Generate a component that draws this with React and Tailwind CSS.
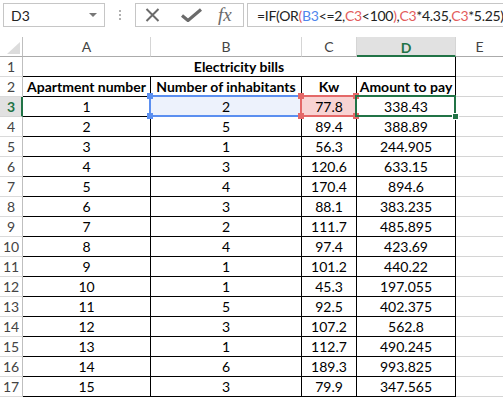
import React from "react";

const data = [
  [1, 2, "77.8", "338.43"],
  [2, 5, "89.4", "388.89"],
  [3, 1, "56.3", "244.905"],
  [4, 3, "120.6", "633.15"],
  [5, 4, "170.4", "894.6"],
  [6, 3, "88.1", "383.235"],
  [7, 2, "111.7", "485.895"],
  [8, 4, "97.4", "423.69"],
  [9, 1, "101.2", "440.22"],
  [10, 1, "45.3", "197.055"],
  [11, 5, "92.5", "402.375"],
  [12, 3, "107.2", "562.8"],
  [13, 1, "112.7", "490.245"],
  [14, 6, "189.3", "993.825"],
  [15, 3, "79.9", "347.565"],
];

function RefBox({ color, fill }) {
  const sq = "absolute w-[6px] h-[6px]";
  return (
    <div className={"absolute -left-[2px] -top-[2px] -right-[1px] -bottom-[1px] border-2 pointer-events-none " + color}>
      <div className={sq + " -left-[4px] -top-[4px] " + fill}></div>
      <div className={sq + " -right-[4px] -top-[4px] " + fill}></div>
      <div className={sq + " -left-[4px] -bottom-[4px] " + fill}></div>
      <div className={sq + " -right-[4px] -bottom-[4px] " + fill}></div>
    </div>
  );
}

function RowHead({ n, sel }) {
  if (sel) {
    return (
      <div className="h-[20px] bg-[#e1e1e1] border-r-2 border-r-[#217346] border-b border-b-[#d4d4d4] flex items-center justify-center text-[14px] font-bold text-[#217346] pl-[1px]">
        {n}
      </div>
    );
  }
  return (
    <div className="h-[20px] border-r border-r-[#bfbfbf] border-b border-b-[#dadada] flex items-center justify-center text-[14px] text-[#444]">
      {n}
    </div>
  );
}

function C({ children, className = "" }) {
  return (
    <div className={"relative h-[20px] border-r border-b border-black flex items-center justify-center text-[14px] text-black " + className}>
      {children}
    </div>
  );
}

function E() {
  return <div className="h-[20px] border-b border-b-[#d4d4d4]"></div>;
}

export default function App() {
  return (
    <div className="w-[503px] h-[399px] bg-white overflow-hidden font-[Lato,sans-serif] select-none">
      {/* formula bar */}
      <div className="h-[37px] flex items-start pt-[3px]">
        <div className="shrink-0 ml-[3px] w-[102px] h-[24px] border border-[#c6c6c6] flex items-center justify-between pl-[7px] pr-[7px]">
          <span className="text-[14px] text-[#222]">D3</span>
          <svg width="8" height="4" viewBox="0 0 8 4"><path d="M0 0H8L4 4Z" fill="#777" /></svg>
        </div>
        <div className="shrink-0 w-[30px] h-[24px] flex flex-col items-center justify-center gap-[2px]">
          <div className="w-[2px] h-[2px] bg-[#b0b0b0]"></div>
          <div className="w-[2px] h-[2px] bg-[#b0b0b0]"></div>
          <div className="w-[2px] h-[2px] bg-[#b0b0b0]"></div>
        </div>
        <div className="shrink-0 w-[109px] h-[24px] border border-[#c6c6c6] flex items-center">
          <svg className="ml-[9px] shrink-0" width="15" height="14" viewBox="0 0 15 14">
            <path d="M1.5 1L13.5 13M13.5 1L1.5 13" stroke="#6b6b6b" strokeWidth="2" />
          </svg>
          <svg className="ml-[21px] shrink-0" width="21" height="14" viewBox="0 0 21 14">
            <path d="M1 7.5L7 12.5L20 1.5" stroke="#6b6b6b" strokeWidth="3.2" fill="none" />
          </svg>
          <span className="ml-[16px] font-['Liberation_Serif',serif] italic text-[19px] leading-none text-[#6b6b6b] -mt-[2px]">fx</span>
        </div>
        <div className="ml-[3px] flex-1 min-w-0 overflow-hidden h-[24px] border-t border-b border-l border-[#c6c6c6] flex items-center pl-[9px] text-[14px] text-[#222] whitespace-nowrap tracking-[-0.3px]">
          <span>=IF(OR</span>
          <span className="text-[#e35c5c]">(</span>
          <span className="text-[#4f86ec]">B3</span>
          <span>&lt;=2,</span>
          <span className="text-[#e35c5c]">C3</span>
          <span>&lt;100</span>
          <span className="text-[#e35c5c]">)</span>
          <span>,</span>
          <span className="text-[#e35c5c]">C3</span>
          <span>*4.35,</span>
          <span className="text-[#e35c5c]">C3</span>
          <span>*5.25)</span>
        </div>
      </div>

      {/* grid */}
      <div className="grid grid-cols-[23px_128px_151px_55px_99px_47px] auto-rows-[20px]">
        {/* column headers */}
        <div className="h-[20px] border-r border-r-[#bfbfbf] border-b border-b-[#ababab] relative">
          <svg className="absolute right-[2px] bottom-[2px]" width="13" height="12" viewBox="0 0 13 12">
            <path d="M13 0V12H0Z" fill="#dcdcdc" />
          </svg>
        </div>
        {["A", "B", "C"].map((l) => (
          <div key={l} className="h-[20px] border-r border-r-[#d5d5d5] border-b border-b-[#ababab] flex items-center justify-center text-[14px] text-[#444]">
            {l}
          </div>
        ))}
        <div className="h-[20px] bg-[#e1e1e1] border-r border-r-[#d5d5d5] border-b-2 border-b-[#217346] flex items-center justify-center text-[14px] font-bold text-[#217346] pt-[2px]">
          D
        </div>
        <div className="h-[20px] border-b border-b-[#ababab] flex items-center justify-center text-[14px] text-[#444]">
          E
        </div>

        {/* row 1 */}
        <RowHead n={1} />
        <div className="col-span-4 h-[20px] border-r border-b border-black flex items-center justify-center text-[14px] font-bold text-black">
          Electricity bills
        </div>
        <E />

        {/* row 2 */}
        <RowHead n={2} />
        <C className="font-bold">Apartment number</C>
        <C className="font-bold">Number of inhabitants</C>
        <C className="font-bold">Kw</C>
        <C className="font-bold">Amount to pay</C>
        <E />

        {data.map((r, i) => {
          const n = i + 3;
          const sel = n === 3;
          return (
            <React.Fragment key={n}>
              <RowHead n={n} sel={sel} />
              <C>{r[0]}</C>
              <C className={sel ? "bg-[#edf2fc] z-10" : ""}>
                {r[1]}
                {sel && <RefBox color="border-[#5b8ff0]" fill="bg-[#5b8ff0]" />}
              </C>
              <C className={sel ? "bg-[#f8d3d3] z-10" : ""}>
                {r[2]}
                {sel && <RefBox color="border-[#e46868]" fill="bg-[#e46868]" />}
              </C>
              <C className={sel ? "z-20" : ""}>
                {r[3]}
                {sel && (
                  <div className="absolute -left-[2px] -top-[2px] -right-[1px] -bottom-[1px] border-2 border-[#217346]">
                    <div className="absolute -right-[5px] -bottom-[5px] w-[7px] h-[7px] bg-[#217346] border border-white"></div>
                  </div>
                )}
              </C>
              <E />
            </React.Fragment>
          );
        })}
      </div>
    </div>
  );
}
